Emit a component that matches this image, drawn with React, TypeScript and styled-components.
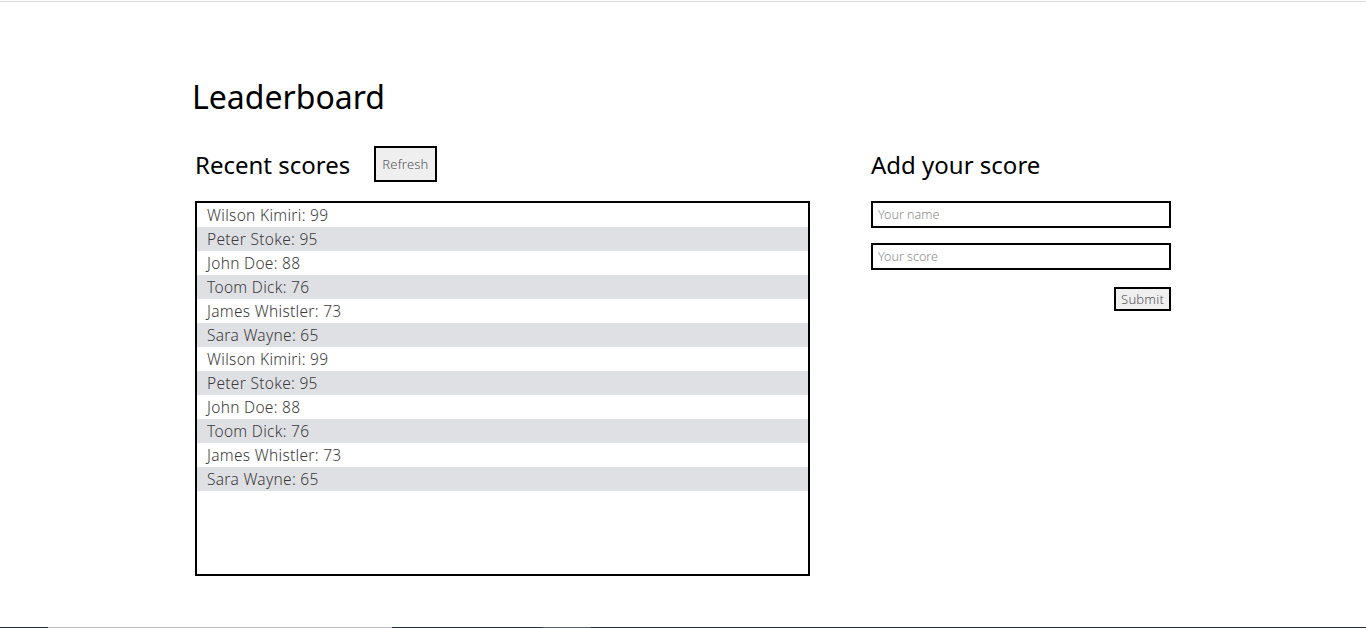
import React from 'react';
import styled, { createGlobalStyle } from 'styled-components';

const GlobalStyle = createGlobalStyle`
  body {
    margin: 0;
    background: #fff;
    font-family: 'Noto Sans', 'DejaVu Sans', sans-serif;
  }
`;

const TopRule = styled.div`
  height: 1px;
  margin-top: 1px;
  background: #dcdcdc;
`;

const Page = styled.div`
  height: 625px;
  box-sizing: border-box;
  padding: 76px 0 0 192px;
`;

const BottomEdge = styled.div`
  height: 1px;
  background: linear-gradient(
    to right,
    #25313a 0 48px,
    #c0c0c0 48px 392px,
    #25313a 392px 542px,
    #55626a 542px 590px,
    #25313a 590px
  );
`;

const Title = styled.h1`
  margin: 0;
  font-family: 'Comic Sans MS', 'Noto Sans', sans-serif;
  font-size: 32px;
  font-weight: 400;
  line-height: 38px;
  color: #000;
`;

const Columns = styled.div`
  display: grid;
  grid-template-columns: 615px 300px;
  column-gap: 61px;
  margin-top: 30px;
  padding-left: 3px;
`;

const Column = styled.section`
  display: flex;
  flex-direction: column;
`;

const Header = styled.div`
  display: flex;
  align-items: center;
  gap: 24px;
  height: 36px;
  margin-bottom: 19px;
`;

const Heading = styled.h2`
  margin: 0;
  font-family: 'Comic Sans MS', 'Noto Sans', sans-serif;
  font-size: 24px;
  font-weight: 400;
  color: #000;
`;

const Button = styled.button<{ $small?: boolean }>`
  box-sizing: border-box;
  height: ${(p) => (p.$small ? '24px' : '36px')};
  padding: 0 ${(p) => (p.$small ? '5px' : '6px')};
  border: 2px solid #000;
  background: #efefef;
  color: #555;
  font-family: 'Noto Sans', sans-serif;
  font-size: 13px;
  font-weight: 300;
  letter-spacing: 0.2px;
  cursor: pointer;
`;

const List = styled.ul`
  box-sizing: border-box;
  height: 375px;
  margin: 0;
  padding: 0;
  list-style: none;
  border: 2px solid #000;
`;

const Item = styled.li`
  height: 24px;
  line-height: 24px;
  padding-left: 10px;
  font-size: 15.5px;
  font-weight: 300;
  letter-spacing: 0.3px;
  color: #3a3a3a;

  &:nth-child(even) {
    background: #dfe0e4;
  }
`;

const Form = styled.form`
  display: flex;
  flex-direction: column;
  gap: 15px;
`;

const Input = styled.input`
  box-sizing: border-box;
  width: 300px;
  height: 27px;
  padding: 0 5px;
  border: 2px solid #000;
  font-family: 'Noto Sans', sans-serif;
  font-size: 12.5px;
  font-weight: 300;
  outline: none;

  &::placeholder {
    color: #8a8a8a;
  }
`;

const Actions = styled.div`
  display: flex;
  justify-content: flex-end;
  margin-top: 2px;
`;

const scores = [
  'Wilson Kimiri: 99',
  'Peter Stoke: 95',
  'John Doe: 88',
  'Toom Dick: 76',
  'James Whistler: 73',
  'Sara Wayne: 65',
];

const App = () => {
  const rows = [...scores, ...scores];

  return (
    <>
      <GlobalStyle />
      <TopRule />
      <Page>
        <Title>Leaderboard</Title>
        <Columns>
          <Column>
            <Header>
              <Heading>Recent scores</Heading>
              <Button type="button">Refresh</Button>
            </Header>
            <List>
              {rows.map((row, i) => (
                <Item key={i}>{row}</Item>
              ))}
            </List>
          </Column>
          <Column>
            <Header>
              <Heading>Add your score</Heading>
            </Header>
            <Form onSubmit={(e) => e.preventDefault()}>
              <Input type="text" placeholder="Your name" />
              <Input type="number" placeholder="Your score" />
              <Actions>
                <Button $small type="submit">
                  Submit
                </Button>
              </Actions>
            </Form>
          </Column>
        </Columns>
      </Page>
      <BottomEdge />
    </>
  );
};

export default App;
